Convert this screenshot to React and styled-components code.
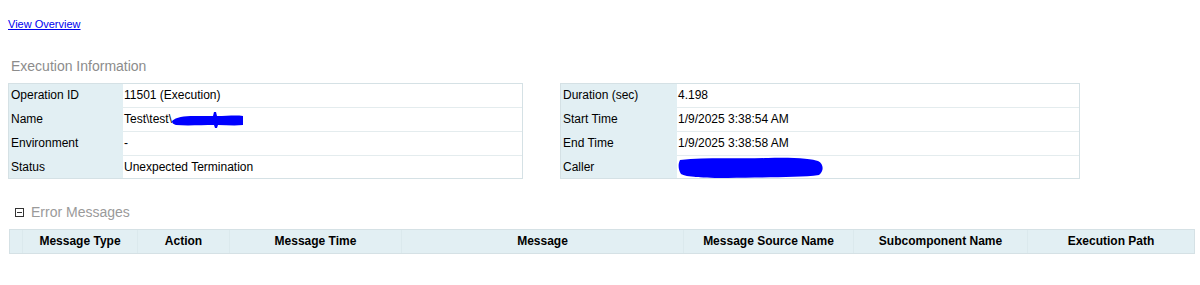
import React from "react"
import styled, { createGlobalStyle } from "styled-components"

const Global = createGlobalStyle`
  body {
    margin: 0;
    background: #fff;
    font-family: "Liberation Sans", Arial, sans-serif;
    font-size: 12px;
    color: #000;
  }
`

const Page = styled.div`
  padding: 17px 8px 0 8px;
`

const OverviewLink = styled.a`
  display: block;
  font-size: 11px;
  color: #0000ee;
  text-decoration: underline;
  height: 14px;
  line-height: 14px;
`

const SectionTitle = styled.div`
  font-size: 14px;
  color: #8c8c8c;
  height: 18px;
  line-height: 18px;
  padding-left: ${p => p.indent || 3}px;
  margin-top: ${p => p.top || 0}px;
  display: flex;
  align-items: center;
  gap: 7px;
`

const Panels = styled.div`
  display: flex;
  gap: 37px;
  margin-top: 8px;
`

const InfoTable = styled.div`
  width: ${p => p.width}px;
  border: 1px solid #d5e1e5;
  display: grid;
  grid-template-columns: ${p => p.labelWidth}px 1fr;
`

const Label = styled.div`
  background: #e2eff3;
  height: ${p => (p.last ? 22 : 23)}px;
  line-height: ${p => (p.last ? 22 : 23)}px;
  padding-left: 2px;
  border-bottom: ${p => (p.last ? "none" : "1px solid #e2eff3")};
`

const Value = styled.div`
  height: ${p => (p.last ? 22 : 23)}px;
  line-height: ${p => (p.last ? 22 : 23)}px;
  padding-left: 1px;
  border-bottom: ${p => (p.last ? "none" : "1px solid #e4ecee")};
  display: flex;
  align-items: center;
`

const Toggle = styled.span`
  width: 7px;
  height: 7px;
  border: 1px solid #333;
  position: relative;
  &::after {
    content: "";
    position: absolute;
    left: 1px;
    right: 1px;
    top: 3px;
    height: 1px;
    background: #333;
  }
`

const ErrorTitle = styled.span`
  color: #9a9a9a;
`

const HeaderGrid = styled.div`
  margin-top: 8px;
  margin-left: 1px;
  width: 1184px;
  display: grid;
  grid-template-columns: 13px 115px 92px 172px 282px 170px 174px 1fr;
  background: #e2eff3;
  border: 1px solid #d5e1e5;
`

const HeaderCell = styled.div`
  height: 23px;
  line-height: 23px;
  text-align: center;
  font-weight: bold;
  font-size: 12px;
  border-right: ${p => (p.end ? "none" : "1px solid #dbe9ed")};
  white-space: nowrap;
`

const Scribble = ({ width, height, d }) => (
  <svg width={width} height={height} viewBox={`0 0 ${width} ${height}`} style={{ display: "block" }}>
    <path d={d} fill="#0000ff" />
  </svg>
)

const leftRows = [
  ["Operation ID", "11501 (Execution)"],
  ["Name", "name"],
  ["Environment", "-"],
  ["Status", "Unexpected Termination"],
]

const rightRows = [
  ["Duration (sec)", "4.198"],
  ["Start Time", "1/9/2025 3:38:54 AM"],
  ["End Time", "1/9/2025 3:38:58 AM"],
  ["Caller", "caller"],
]

const renderValue = v => {
  if (v === "name")
    return (
      <>
        <span>Test\test\</span>
        <Scribble
          width={72}
          height={16}
          d="M0 9 C4 5 12 4 22 4 L41 4 L42 0 L44 0 L45 4 C55 4 64 3 71 4 L71 13 C62 14 54 13 46 13 L45 16 L43 16 L42 13 C30 13 15 14 4 13 C1 12 0 11 0 9 Z"
        />
      </>
    )
  if (v === "caller")
    return (
      <Scribble
        width={148}
        height={22}
        d="M2 4 C30 1 60 3 90 2 C115 1 135 3 140 5 C146 8 146 15 141 19 C120 22 80 21 50 22 C25 22 8 21 3 18 C0 13 0 8 2 4 Z"
      />
    )
  return v
}

const headers = [
  "",
  "Message Type",
  "Action",
  "Message Time",
  "Message",
  "Message Source Name",
  "Subcomponent Name",
  "Execution Path",
]

const Info = ({ rows, width, labelWidth }) => (
  <InfoTable width={width} labelWidth={labelWidth}>
    {rows.map(([l, v], i) => (
      <React.Fragment key={l}>
        <Label last={i === rows.length - 1}>{l}</Label>
        <Value last={i === rows.length - 1}>{renderValue(v)}</Value>
      </React.Fragment>
    ))}
  </InfoTable>
)

export default function App() {
  return (
    <>
      <Global />
      <Page>
        <OverviewLink href="#">View Overview</OverviewLink>
        <SectionTitle top={26}>Execution Information</SectionTitle>
        <Panels>
          <Info rows={leftRows} width={513} labelWidth={114} />
          <Info rows={rightRows} width={518} labelWidth={116} />
        </Panels>
        <SectionTitle indent={7} top={24}>
          <Toggle />
          <ErrorTitle>Error Messages</ErrorTitle>
        </SectionTitle>
        <HeaderGrid>
          {headers.map((h, i) => (
            <HeaderCell key={i} end={i === headers.length - 1}>
              {h}
            </HeaderCell>
          ))}
        </HeaderGrid>
      </Page>
    </>
  )
}
